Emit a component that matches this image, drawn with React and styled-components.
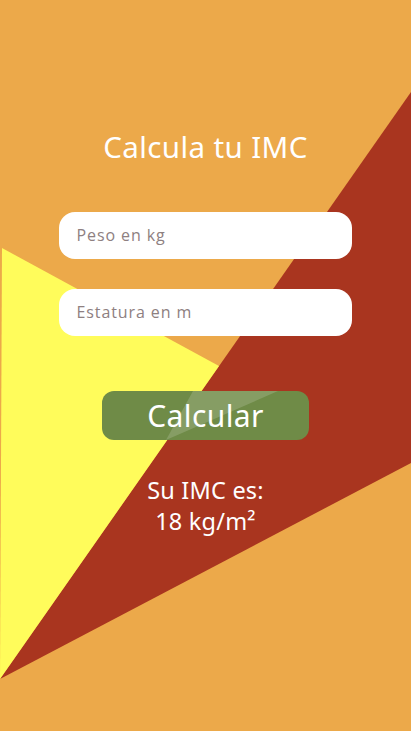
import React from 'react';
import styled, { createGlobalStyle } from 'styled-components';

const GlobalStyle = createGlobalStyle`
  html, body {
    margin: 0;
    padding: 0;
    background: #eca94a;
  }
`;

const Screen = styled.div`
  position: relative;
  width: 411px;
  height: 731px;
  overflow: hidden;
  background-color: #eca94a;
  font-family: "Noto Sans", "Open Sans", sans-serif;
`;

const Backdrop = styled.svg`
  position: absolute;
  inset: 0;
  width: 411px;
  height: 731px;
  z-index: 0;
`;

const Content = styled.div`
  position: relative;
  z-index: 1;
  display: flex;
  flex-direction: column;
  align-items: center;
  padding-top: 128px;
`;

const Title = styled.h1`
  margin: 0 0 46px;
  font-size: 29.5px;
  line-height: 38px;
  font-weight: 400;
  color: #fff;
  letter-spacing: 0.4px;
`;

const Form = styled.div`
  display: flex;
  flex-direction: column;
  gap: 30px;
  margin-left: -1px;
`;

const Field = styled.input`
  box-sizing: border-box;
  width: 293px;
  height: 47px;
  border: none;
  border-radius: 16px;
  background: #fff;
  padding: 0 18px 2px;
  font-family: "Open Sans", sans-serif;
  font-size: 16px;
  color: #4a3f3f;
  outline: none;

  &::placeholder {
    color: #8e8081;
    letter-spacing: 0.9px;
  }
`;

const Button = styled.button`
  position: relative;
  overflow: hidden;
  margin-top: 55px;
  width: 207px;
  height: 49px;
  border: none;
  border-radius: 12px;
  background: #6f8b47;
  color: #fff;
  font-family: "Noto Sans", "Open Sans", sans-serif;
  font-size: 30px;
  line-height: 48px;
  padding: 0;
  letter-spacing: 0.4px;
  cursor: pointer;

  &::before {
    content: "";
    position: absolute;
    inset: 0;
    background: rgba(255, 255, 255, 0.16);
    clip-path: polygon(91px 0, 176px 0, 64px 49px);
  }
`;

const Label = styled.span`
  position: relative;
`;

const Result = styled.div`
  margin-top: 35px;
  display: flex;
  flex-direction: column;
  align-items: center;
  color: #fff;
  font-size: 23.5px;
  letter-spacing: 0.2px;
`;

const ResultLine = styled.span`
  display: block;
  line-height: 31px;
`;

export default function App() {
  return (
    <Screen>
      <GlobalStyle />
      <Backdrop viewBox="0 0 411 731" preserveAspectRatio="none">
        <polygon points="411,92 411,463 0,679" fill="#a9351f" />
        <polygon points="2,248 219,366 0,679" fill="#fffc5b" />
      </Backdrop>
      <Content>
        <Title>Calcula tu IMC</Title>
        <Form>
          <Field type="text" placeholder="Peso en kg" />
          <Field type="text" placeholder="Estatura en m" />
        </Form>
        <Button>
          <Label>Calcular</Label>
        </Button>
        <Result>
          <ResultLine>Su IMC es:</ResultLine>
          <ResultLine>18 kg/m²</ResultLine>
        </Result>
      </Content>
    </Screen>
  );
}
